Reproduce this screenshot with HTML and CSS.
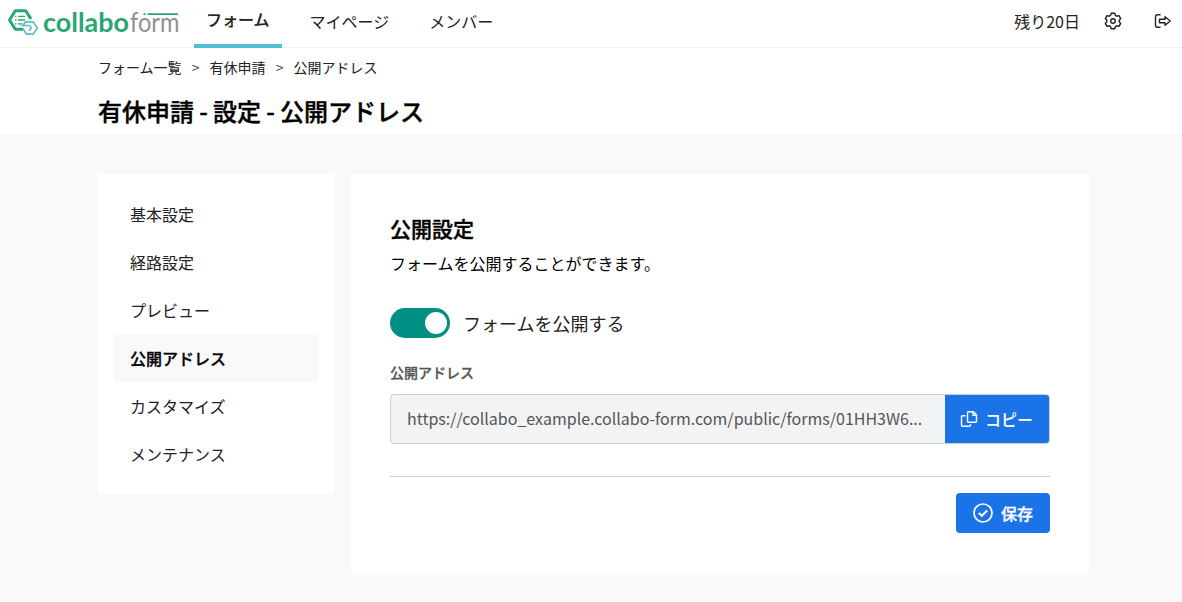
FILE: index.html
```html
<!DOCTYPE html>
<html lang="ja">

<head>
    <meta charset="UTF-8">
    <meta name="viewport" content="width=device-width, initial-scale=1.0">
    <title>有休申請 - 設定 - 公開アドレス</title>
    <link rel="stylesheet" href="styles.css">
</head>

<body>
    <header class="header">
        <a class="logo" href="#">
            <svg width="186" height="47" viewBox="0 0 186 47">
                <g fill="none" stroke-linejoin="round">
                    <path d="M23.5 29.3H15.3L9.5 20l5.800-9.300h10.400L31 19" stroke="#2ba573" stroke-width="3"/>
                    <path d="M15 16.300h1.500M18 16.300h7M15 20h1.500M18 20h7M15 23.800h1.500M18 23.800h4.500" stroke="#2ba573" stroke-width="1.300"/>
                    <path d="M21.500 25.400h8l1.800 2.600-2.200 2.800" stroke="#5bb9d6" stroke-width="1.500"/>
                    <path d="M23 25.400l2.500-3.500h7.800l4 6-4 6.200h-6.800l-3-4.600" stroke="#5bb9d6" stroke-width="1.700"/>
                </g>
                <text class="logo-main" x="43" y="32.300" textLength="86" lengthAdjust="spacingAndGlyphs">collabo</text>
                <text class="logo-sub" x="130" y="32.300" textLength="49.500" lengthAdjust="spacingAndGlyphs">form</text>
                <path d="M143.500 14.200h2M147.500 14.200H178" stroke="#2ba573" stroke-width="1.800"/>
            </svg>
        </a>
        <nav class="nav">
            <a class="nav-item active" href="#">フォーム</a>
            <a class="nav-item" href="#">マイページ</a>
            <a class="nav-item" href="#">メンバー</a>
        </nav>
        <div class="header-right">
            <span>残り20日</span>
            <svg class="icon-gear" width="18" height="18" viewBox="0 0 18 18" fill="none" stroke="#222" stroke-width="1.4" stroke-linejoin="round">
                <path d="M7.2 1.2h3.6l.6 2.2 1.3.8 2.300-.6 1.700 3-1.500 1.600v1.600l1.500 1.600-1.700 3-2.300-.6-1.300.8-.6 2.200H7.200l-.6-2.200-1.300-.8-2.300.6-1.700-3 1.500-1.600V8.200L1.300 6.600l1.700-3 2.300.6 1.300-.8z"/>
                <circle cx="9" cy="9" r="2.300"/>
            </svg>
            <svg class="icon-logout" width="18" height="16" viewBox="0 0 18 16" fill="none" stroke="#222" stroke-width="1.4" stroke-linejoin="round">
                <path d="M6.500 1.700H3.500a2 2 0 0 0-2 2v8.600a2 2 0 0 0 2 2h3"/>
                <path d="M5.500 6.300H11V3.800L16.300 8 11 12.200V9.700H5.500z"/>
            </svg>
        </div>
    </header>

    <div class="page-head">
        <div class="breadcrumb">
            <a href="#">フォーム一覧</a>
            <span>&gt;</span>
            <a href="#">有休申請</a>
            <span>&gt;</span>
            <a href="#">公開アドレス</a>
        </div>
        <h1 class="page-title">有休申請 - 設定 - 公開アドレス</h1>
    </div>

    <div class="container">
        <div class="side-menu">
            <a href="#">基本設定</a>
            <a href="#">経路設定</a>
            <a href="#">プレビュー</a>
            <a class="active" href="#">公開アドレス</a>
            <a href="#">カスタマイズ</a>
            <a href="#">メンテナンス</a>
        </div>
        <form class="panel">
            <h2 class="panel-title">公開設定</h2>
            <p class="panel-text">フォームを公開することができます。</p>
            <div class="switch-row">
                <span class="switch"><span class="knob"></span></span>
                <span>フォームを公開する</span>
            </div>
            <div class="field-label">公開アドレス</div>
            <div class="address">
                <div class="address-url">https://collabo_example.collabo-form.com/public/forms/01HH3W6...</div>
                <button type="button" class="copy">
                    <svg width="18" height="18" viewBox="0 0 18 18" fill="none" stroke="#fff" stroke-width="1.400" stroke-linejoin="round">
                        <path d="M8.500 1.750h5l3 3v6.500a1 1 0 0 1-1 1h-7a1 1 0 0 1-1-1v-8.500a1 1 0 0 1 1-1z"/>
                        <path d="M13 1.750v3.500h3.500"/>
                        <path d="M5.500 5.750h-3a1 1 0 0 0-1 1v8.500a1 1 0 0 0 1 1h7a1 1 0 0 0 1-1v-1"/>
                    </svg>
                    <span>コピー</span>
                </button>
            </div>
            <div class="actions">
                <button type="button" class="save">
                    <svg width="20" height="20" viewBox="0 0 20 20" fill="none" stroke="#fff">
                        <circle cx="10" cy="10" r="9" stroke-width="1.700"/>
                        <path d="M5.800 9.900l3 2.800 5.400-5.200" stroke-width="2.100"/>
                    </svg>
                    <span>保存</span>
                </button>
            </div>
        </form>
    </div>
</body>

</html>
```
FILE: styles.css
```css
* {
    margin: 0;
    padding: 0;
    box-sizing: border-box;
}
body {
    background-color: #f9f9f9;
    color: #000;
    font-family: "Noto Sans CJK JP", sans-serif;
    font-size: 16px;
    line-height: 24px;
}
a {
    color: #222;
    text-decoration: none;
}
.header {
    display: flex;
    height: 48px;
    padding-right: 10px;
    background-color: #fff;
    border-bottom: 1px solid #f3f3f3;
}
.logo {
    width: 194px;
}
.logo svg {
    display: block;
}
.logo-main,
.logo-sub {
    font-family: Lato, sans-serif;
    font-size: 27px;
}
.logo-main {
    font-weight: 700;
    fill: #2ba573;
}
.logo-sub {
    font-weight: 400;
    fill: #919191;
}
.nav {
    display: flex;
    height: 48px;
    gap: 16px;
}
.nav-item {
    height: 48px;
    padding: 9px 12px 0;
}
.nav-item.active {
    padding-top: 7px;
    font-weight: 500;
    -webkit-text-stroke: 0.2px;
    border-bottom: 4px solid #4fc0d3;
}
.header-right {
    display: flex;
    align-items: center;
    margin-left: auto;
    padding-bottom: 5px;
    color: #222;
}
.icon-gear {
    margin: 0 32px 0 24px;
}
.page-head {
    height: 86px;
    padding: 7px 98px 0;
    background-color: #fff;
}
.breadcrumb {
    display: flex;
    gap: 9px;
    font-size: 14px;
}
.breadcrumb span {
    width: 10px;
    text-align: center;
    color: #444;
}
.page-title {
    margin-top: 14px;
    font-size: 24px;
    line-height: 36px;
    font-weight: 500;
    word-spacing: -0.2px;
    -webkit-text-stroke: 0.4px;
}
.container {
    display: flex;
    align-items: flex-start;
    gap: 16px;
    padding: 40px 92px 29px 98px;
}
.side-menu {
    width: 236px;
    padding: 16px;
    background-color: #fff;
}
.side-menu a {
    display: block;
    height: 48px;
    padding: 12px 16px;
    border-radius: 4px;
}
.side-menu a.active {
    color: #000;
    font-weight: 500;
    -webkit-text-stroke: 0.3px;
    background-color: #f9f9f9;
}
.panel {
    flex: 1;
    padding: 38px 40px 40px;
    background-color: #fff;
    border-radius: 4px;
}
.panel-title {
    font-size: 21px;
    line-height: 32px;
    font-weight: 500;
    -webkit-text-stroke: 0.4px;
}
.panel-text {
    margin-top: 7px;
}
.switch-row {
    display: flex;
    align-items: center;
    gap: 13px;
    height: 30px;
    margin-top: 33px;
    font-size: 18px;
    color: #222;
}
.switch {
    display: flex;
    justify-content: flex-end;
    width: 60px;
    height: 30px;
    padding: 4px 3px;
    border-radius: 15px;
    background-color: #008f83;
}
.knob {
    width: 22px;
    height: 22px;
    border-radius: 50%;
    background-color: #fff;
}
.field-label {
    margin-top: 22px;
    font-size: 14px;
    font-weight: 500;
    -webkit-text-stroke: 0.3px;
    color: #555;
}
.address {
    display: flex;
    height: 50px;
    margin-top: 10px;
    border: 1px solid #cbd0d7;
    border-radius: 4px;
    background-color: #f1f3f5;
}
.address-url {
    flex: 1;
    padding: 11px 16px;
    color: #555;
    white-space: nowrap;
}
button {
    display: flex;
    align-items: center;
    gap: 8px;
    border: 0;
    color: #fff;
    font-family: inherit;
    font-size: 16px;
    font-weight: 500;
    line-height: 24px;
    background-color: #1b73e8;
}
.copy {
    width: 104px;
    padding: 0 0 1px 15px;
    gap: 7px;
    border-radius: 0 3px 3px 0;
}
.actions {
    display: flex;
    justify-content: flex-end;
    margin-top: 32px;
    padding-top: 16px;
    border-top: 1px solid #cbd0d7;
}
.save {
    width: 94px;
    height: 40px;
    padding-left: 17px;
    border-radius: 4px;
    -webkit-text-stroke: 0.3px;
}
```
